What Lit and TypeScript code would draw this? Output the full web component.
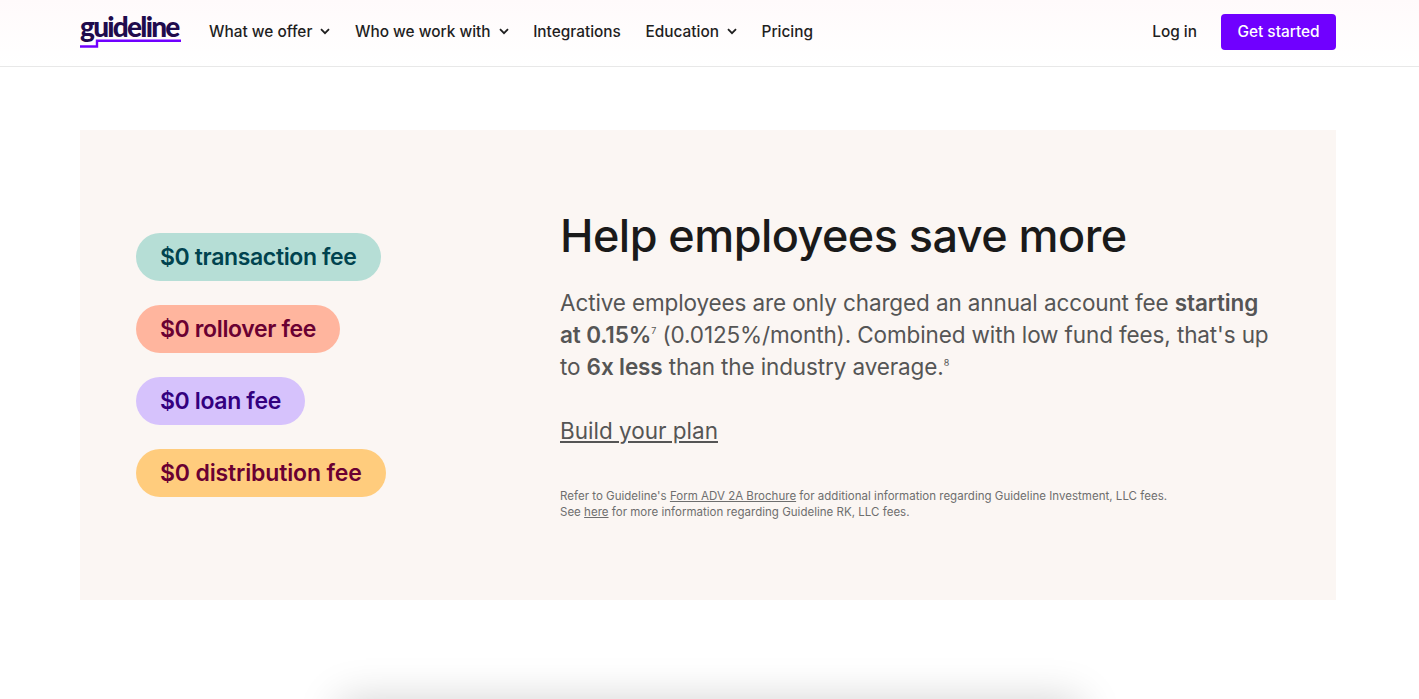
import { LitElement, html, css } from 'lit';
import { customElement } from 'lit/decorators.js';

const chevron = html`<svg class="chev" width="10" height="7" viewBox="0 0 10 7"><path d="M1 1.2 L5 5.2 L9 1.2" fill="none" stroke="currentColor" stroke-width="1.8"/></svg>`;

const pills = [
  { label: '$0 transaction fee', cls: 'teal' },
  { label: '$0 rollover fee', cls: 'coral' },
  { label: '$0 loan fee', cls: 'violet' },
  { label: '$0 distribution fee', cls: 'amber' },
];

@customElement('app-root')
export class AppRoot extends LitElement {
  static styles = css`
    :host {
      display: block;
      height: 699px;
      overflow: hidden;
      background: #ffffff;
      font-family: 'Inter', 'Liberation Sans', sans-serif;
      color: #1a1a1a;
    }

    header {
      height: 66px;
      box-sizing: content-box;
      border-bottom: 1px solid #e8e8e8;
      padding: 0 83px 0 80px;
      display: flex;
      align-items: center;
      background: linear-gradient(180deg, #fffafb 0%, #ffffff 100%);
    }
    .bar {
      display: flex;
      align-items: center;
      width: 100%;
      height: 64px;
      margin-bottom: 2px;
    }

    .logo {
      position: relative;
      display: block;
      width: 101px;
      height: 34px;
      margin-right: 28px;
      color: #1f0b4d;
      font-family: 'Lato', 'Inter', sans-serif;
      font-size: 28px;
      font-weight: 900;
      line-height: 22px;
      letter-spacing: -1.75px;
      text-decoration: none;
    }
    .logo svg {
      position: absolute;
      left: 0;
      top: 17px;
    }

    nav {
      display: flex;
      align-items: center;
      gap: 24.6px;
      flex: 1;
      padding-bottom: 2px;
    }
    nav a,
    .login {
      display: flex;
      align-items: center;
      gap: 8px;
      font-size: 15.4px;
      font-weight: 500;
      color: #1f1f1f;
      text-decoration: none;
    }
    .login {
      padding-bottom: 2px;
    }
    .chev {
      color: #1f1f1f;
    }

    .cta {
      margin-left: 24px;
      width: 115px;
      height: 36px;
      box-sizing: border-box;
      padding-bottom: 2px;
      background: #7000ff;
      border-radius: 4px;
      color: #ffffff;
      font-size: 15.4px;
      font-weight: 500;
      display: flex;
      align-items: center;
      justify-content: center;
      text-decoration: none;
    }

    .card {
      margin: 63px 83px 0 80px;
      height: 470px;
      box-sizing: border-box;
      background: #fbf6f3;
      padding: 0 56px;
      display: flex;
      align-items: center;
    }

    .pills {
      width: 424px;
      flex: none;
      display: flex;
      flex-direction: column;
      align-items: flex-start;
      gap: 24px;
    }
    .pill {
      height: 48px;
      box-sizing: border-box;
      padding: 0 24px 1px;
      border-radius: 24px;
      display: flex;
      align-items: center;
      font-size: 23px;
      font-weight: 600;
      letter-spacing: -0.36px;
    }
    .teal { background: #b6ded6; color: #00434f; }
    .coral { background: #ffb59e; color: #6a0032; }
    .violet { background: #d6c2fc; color: #33007f; }
    .amber { background: #ffcc7d; color: #6a0032; letter-spacing: -0.15px; }

    .copy {
      flex: 1;
      padding: 0 10px 4px 0;
    }
    h2 {
      margin: 1px 0 23px;
      font-size: 45px;
      line-height: 56px;
      font-weight: 500;
      letter-spacing: -0.55px;
      color: #1a1a1a;
    }
    .lead {
      margin: 0 0 32px;
      font-size: 22.5px;
      line-height: 32px;
      letter-spacing: -0.12px;
      color: #555555;
    }
    .lead b {
      font-weight: 600;
    }
    .lead sup {
      font-size: 9px;
      line-height: 0;
      vertical-align: 9px;
    }
    .build {
      display: block;
      font-size: 22.5px;
      line-height: 32px;
      color: #555555;
      margin-bottom: 41px;
    }
    .fine {
      margin: 0;
      font-size: 11.5px;
      line-height: 16px;
      letter-spacing: 0.02px;
      color: #6e6e6e;
    }
    .fine a {
      color: inherit;
    }

    .next {
      width: 740px;
      height: 200px;
      margin: 100px auto 0;
      background: #ffffff;
      box-shadow: 0 0 40px rgba(0, 0, 0, 0.18);
    }
  `;

  render() {
    return html`
      <header>
        <div class="bar">
          <a class="logo" href="#">guideline
            <svg width="102" height="18" viewBox="0 0 102 18">
              <path d="M0 14.5 H17 V8.8 H101" fill="none" stroke="#7000ff" stroke-width="2.4"/>
            </svg>
          </a>
          <nav>
            <a href="#">What we offer ${chevron}</a>
            <a href="#">Who we work with ${chevron}</a>
            <a href="#">Integrations</a>
            <a href="#">Education ${chevron}</a>
            <a href="#">Pricing</a>
          </nav>
          <a class="login" href="#">Log in</a>
          <a class="cta" href="#">Get started</a>
        </div>
      </header>

      <section class="card">
        <div class="pills">
          ${pills.map((p) => html`<div class="pill ${p.cls}">${p.label}</div>`)}
        </div>
        <div class="copy">
          <h2>Help employees save more</h2>
          <p class="lead">
            Active employees are only charged an annual account fee <b>starting at 0.15%</b><sup>7</sup>
            (0.0125%/month). Combined with low fund fees, that's up to <b>6x less</b> than the industry average.<sup>8</sup>
          </p>
          <a class="build" href="#">Build your plan</a>
          <p class="fine">
            Refer to Guideline's <a href="#">Form ADV 2A Brochure</a> for additional information regarding Guideline Investment, LLC fees.<br />
            See <a href="#">here</a> for more information regarding Guideline RK, LLC fees.
          </p>
        </div>
      </section>

      <div class="next"></div>
    `;
  }
}
